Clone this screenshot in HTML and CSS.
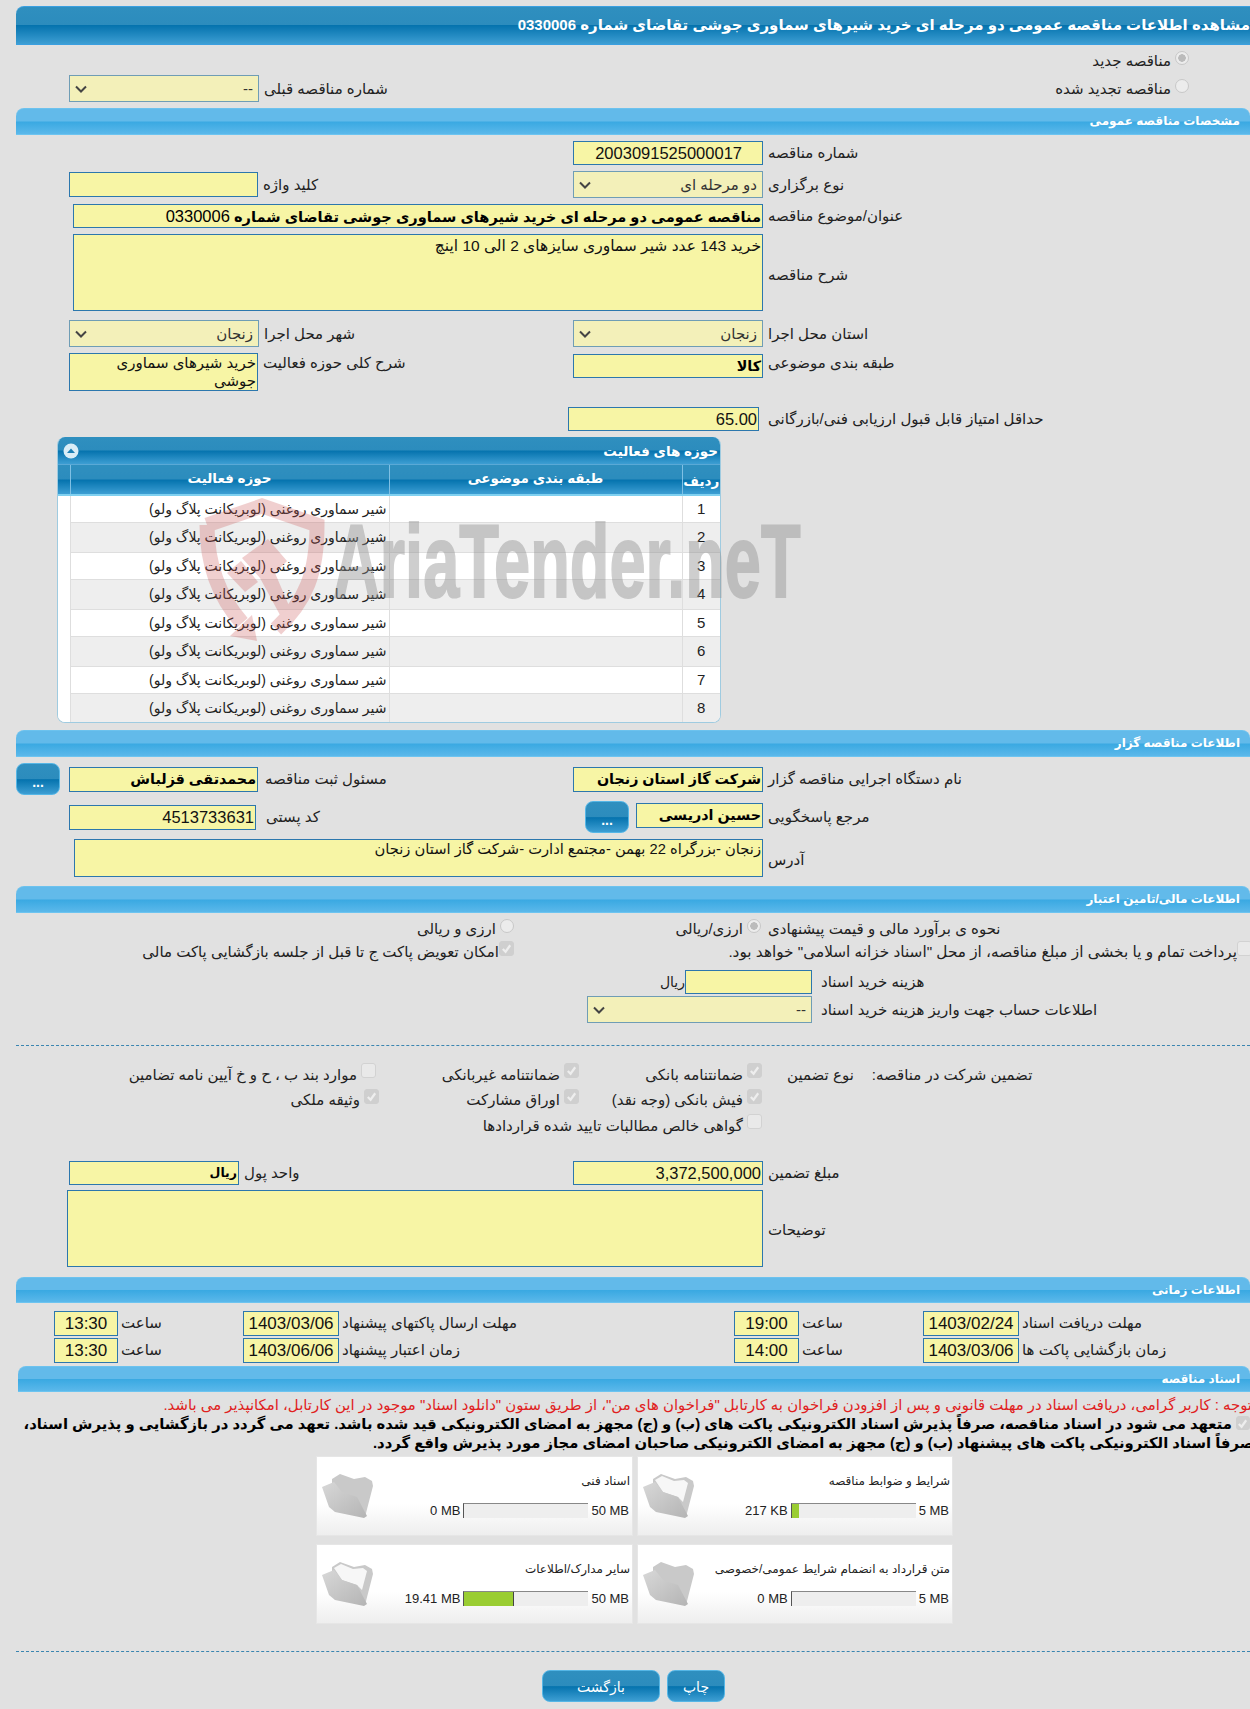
FILE: index.html
```html
<!DOCTYPE html>
<html lang="fa">
<head>
<meta charset="utf-8">
<title>مشاهده اطلاعات مناقصه</title>
<link rel="stylesheet" href="styles.css">
</head>
<body>
<div class="page">
  <div class="title-bar"><span>مشاهده اطلاعات مناقصه عمومی دو مرحله ای خرید شیرهای سماوری جوشی تقاضای شماره 0330006</span></div>

  <div class="top-row first">
    <div class="opt"><span class="radio on"></span><span>مناقصه جدید</span></div>
  </div>
  <div class="top-row">
    <div class="left">
      <div class="field select w190"><svg class="chev" viewBox="0 0 12 8"><path d="M1 1.5l5 5 5-5"/></svg><span>--</span></div>
      <span class="label">شماره مناقصه قبلی</span>
    </div>
    <div class="opt"><span class="radio"></span><span>مناقصه تجدید شده</span></div>
  </div>

  <div class="bar sec-a"><span>مشخصات مناقصه عمومی</span></div>

  <div class="row">
    <div class="left"></div>
    <div class="right"><div class="field num w190 inset">2003091525000017</div><span class="label">شماره مناقصه</span></div>
  </div>
  <div class="row">
    <div class="left"><div class="field w189 h25"></div><span class="label">کلید واژه</span></div>
    <div class="right"><div class="field select w190"><svg class="chev" viewBox="0 0 12 8"><path d="M1 1.5l5 5 5-5"/></svg><span>دو مرحله ای</span></div><span class="label">نوع برگزاری</span></div>
  </div>
  <div class="row">
    <div class="wide-l"><div class="field bold topic wide">مناقصه عمومی دو مرحله ای خرید شیرهای سماوری جوشی تقاضای شماره <span class="reg">0330006</span></div></div>
    <span class="label">عنوان/موضوع مناقصه</span>
  </div>
  <div class="row">
    <div class="wide-l"><div class="field area wide h77">خرید 143 عدد شیر سماوری سایزهای 2 الی 10 اینچ</div></div>
    <span class="label low">شرح مناقصه</span>
  </div>
  <div class="row mt9">
    <div class="left"><div class="field select w190"><svg class="chev" viewBox="0 0 12 8"><path d="M1 1.5l5 5 5-5"/></svg><span>زنجان</span></div><span class="label">شهر محل اجرا</span></div>
    <div class="right"><div class="field select w190"><svg class="chev" viewBox="0 0 12 8"><path d="M1 1.5l5 5 5-5"/></svg><span>زنجان</span></div><span class="label">استان محل اجرا</span></div>
  </div>
  <div class="row top">
    <div class="left top"><div class="field area w189 h38">خرید شیرهای سماوری جوشی</div><span class="label lift">شرح کلی حوزه فعالیت</span></div>
    <div class="right top"><div class="field bold w190 h24 mt1">کالا</div><span class="label lift">طبقه بندی موضوعی</span></div>
  </div>
  <div class="row mt16">
    <div class="score-gap"></div>
    <div class="field num w191">65.00</div><span class="label ml9">حداقل امتیاز قابل قبول ارزیابی فنی/بازرگانی</span>
  </div>

  <div class="grid-wrap">
    <div class="grid-title">
      <svg class="collapse" viewBox="0 0 16 16"><circle cx="8" cy="8" r="7.5" fill="#d9edf7"/><path d="M4 10l4-4.5 4 4.5z" fill="#1b7fb5"/></svg>
      <span>حوزه های فعالیت</span>
    </div>
    <table class="grid">
      <colgroup><col class="c0"><col class="c1"><col class="c2"><col class="c3"></colgroup>
      <thead><tr><th></th><th>حوزه فعالیت</th><th>طبقه بندی موضوعی</th><th class="th-low">ردیف</th></tr></thead>
      <tbody>
        <tr><td></td><td class="act">شیر سماوری روغنی (لوبریکانت پلاگ ولو)</td><td></td><td class="n">1</td></tr>
        <tr><td></td><td class="act">شیر سماوری روغنی (لوبریکانت پلاگ ولو)</td><td></td><td class="n">2</td></tr>
        <tr><td></td><td class="act">شیر سماوری روغنی (لوبریکانت پلاگ ولو)</td><td></td><td class="n">3</td></tr>
        <tr><td></td><td class="act">شیر سماوری روغنی (لوبریکانت پلاگ ولو)</td><td></td><td class="n">4</td></tr>
        <tr><td></td><td class="act">شیر سماوری روغنی (لوبریکانت پلاگ ولو)</td><td></td><td class="n">5</td></tr>
        <tr><td></td><td class="act">شیر سماوری روغنی (لوبریکانت پلاگ ولو)</td><td></td><td class="n">6</td></tr>
        <tr><td></td><td class="act">شیر سماوری روغنی (لوبریکانت پلاگ ولو)</td><td></td><td class="n">7</td></tr>
        <tr><td></td><td class="act">شیر سماوری روغنی (لوبریکانت پلاگ ولو)</td><td></td><td class="n">8</td></tr>
      </tbody>
    </table>
  </div>

  <div class="bar sec-b"><span>اطلاعات مناقصه گزار</span></div>

  <div class="row">
    <div class="left flush">
      <div class="btn dots">...</div>
      <div class="field bold w189 h25 ml9">محمدتقی قزلباش</div><span class="label ml7">مسئول ثبت مناقصه</span>
    </div>
    <div class="right"><div class="field bold w190 h25">شرکت گاز استان زنجان</div><span class="label">نام دستگاه اجرایی مناقصه گزار</span></div>
  </div>
  <div class="row">
    <div class="left"><div class="field num w187 h25">4513733631</div><span class="label ml10">کد پستی</span></div>
    <div class="right"><div class="btn dots ml12">...</div><div class="field bold w127 h25 ml7 raise">حسین ادریسی</div><span class="label">مرجع پاسخگویی</span></div>
  </div>
  <div class="row">
    <div class="addr-l"><div class="field area addr">زنجان -بزرگراه 22 بهمن -مجتمع ادارت -شرکت گاز استان زنجان</div></div>
    <span class="label low">آدرس</span>
  </div>

  <div class="bar sec-c"><span>اطلاعات مالی/تامین اعتبار</span></div>

  <div class="row mt7 h18">
    <div class="end-l"><div class="opt"><span class="radio"></span><span>ارزی و ریالی</span></div></div>
    <div class="end-r"><div class="opt"><span class="radio on"></span><span>ارزی/ریالی</span></div></div>
    <span class="label">نحوه ی برآورد مالی و قیمت پیشنهادی</span>
  </div>
  <div class="row mt5 h18">
    <div class="end-l"><div class="opt tight"><span class="check on"><svg viewBox="0 0 14 14"><path d="M3 7.5l3 3 5-7"/></svg></span><span>امکان تعویض پاکت ج تا قبل از جلسه بازگشایی پاکت مالی</span></div></div>
    <div class="opt tight far"><span class="check"></span><span>پرداخت تمام و یا بخشی از مبلغ مناقصه، از محل "اسناد خزانه اسلامی" خواهد بود.</span></div>
  </div>
  <div class="row mt9">
    <div class="doc-ctl"><span class="plain">ریال</span><div class="field w127"></div></div>
    <span class="label ml9">هزینه خرید اسناد</span>
  </div>
  <div class="row mt2">
    <div class="doc-sel"><div class="field select doc"><svg class="chev" viewBox="0 0 12 8"><path d="M1 1.5l5 5 5-5"/></svg><span>--</span></div></div>
    <span class="label ml9">اطلاعات حساب جهت واریز هزینه خرید اسناد</span>
  </div>

  <div class="dash d1"></div>

  <div class="guar">
    <div class="gcols">
      <div class="opt"><span class="check on"><svg viewBox="0 0 14 14"><path d="M3 7.5l3 3 5-7"/></svg></span><span>ضمانتنامه بانکی</span></div>
      <div class="opt"><span class="check on"><svg viewBox="0 0 14 14"><path d="M3 7.5l3 3 5-7"/></svg></span><span>ضمانتنامه غیربانکی</span></div>
      <div class="opt"><span class="check"></span><span>موارد بند ب ، ح و خ آیین نامه تضامین</span></div>
      <div class="opt"><span class="check on"><svg viewBox="0 0 14 14"><path d="M3 7.5l3 3 5-7"/></svg></span><span>فیش بانکی (وجه نقد)</span></div>
      <div class="opt"><span class="check on"><svg viewBox="0 0 14 14"><path d="M3 7.5l3 3 5-7"/></svg></span><span>اوراق مشارکت</span></div>
      <div class="opt shift"><span class="check on"><svg viewBox="0 0 14 14"><path d="M3 7.5l3 3 5-7"/></svg></span><span>وثیقه ملکی</span></div>
      <div class="opt span3"><span class="check"></span><span>گواهی خالص مطالبات تایید شده قراردادها</span></div>
    </div>
    <span class="label g-type">نوع تضمین</span>
    <span class="label g-head">تضمین شرکت در مناقصه:</span>
  </div>

  <div class="row mt22">
    <div class="left"><div class="field bold unit-box w170">ریال</div><span class="label unit">واحد پول</span></div>
    <div class="right"><div class="field num w190">3,372,500,000</div><span class="label">مبلغ تضمین</span></div>
  </div>
  <div class="row mt5">
    <div class="note-l"><div class="field area note-box"></div></div>
    <span class="label low">توضیحات</span>
  </div>

  <div class="bar sec-d"><span>اطلاعات زمانی</span></div>

  <div class="times">
    <span></span>
    <div class="field num c">13:30</div>
    <span class="label">ساعت</span>
    <div class="field num c">1403/03/06</div>
    <span class="label">مهلت ارسال پاکتهای پیشنهاد</span>
    <div class="field num c">19:00</div>
    <span class="label">ساعت</span>
    <div class="field num c">1403/02/24</div>
    <span class="label">مهلت دریافت اسناد</span>

    <span></span>
    <div class="field num c">13:30</div>
    <span class="label">ساعت</span>
    <div class="field num c">1403/06/06</div>
    <span class="label">زمان اعتبار پیشنهاد</span>
    <div class="field num c">14:00</div>
    <span class="label">ساعت</span>
    <div class="field num c">1403/03/06</div>
    <span class="label">زمان بازگشایی پاکت ها</span>
  </div>

  <div class="bar sec-e"><span>اسناد مناقصه</span></div>

  <p class="red">توجه : کاربر گرامی، دریافت اسناد در مهلت قانونی و پس از افزودن فراخوان به کارتابل "فراخوان های من"، از طریق ستون "دانلود اسناد" موجود در این کارتابل، امکانپذیر می باشد.</p>
  <div class="pledge">
    <span class="check on pledge-check"><svg viewBox="0 0 14 14"><path d="M3 7.5l3 3 5-7"/></svg></span>
    متعهد می شود در اسناد مناقصه، صرفاً پذیرش اسناد الکترونیکی پاکت های (ب) و (ج) مجهز به امضای الکترونیکی قید شده باشد. تعهد می گردد در بازگشایی و پذیرش اسناد،
    <span class="line2">صرفاً اسناد الکترونیکی پاکت های پیشنهاد (ب) و (ج) مجهز به امضای الکترونیکی صاحبان امضای مجاز مورد پذیرش واقع گردد.</span>
  </div>

  <div class="cards">
    <div class="card">
      <svg class="folder" viewBox="0 0 52 46"><use href="#fold-empty"/></svg>
      <div class="card-body">
        <div class="card-title">اسناد فنی</div>
        <div class="meter"><span class="val">0 MB</span><span class="track"></span><span class="max">50 MB</span></div>
      </div>
    </div>
    <div class="card">
      <svg class="folder" viewBox="0 0 52 46"><use href="#fold-full"/></svg>
      <div class="card-body">
        <div class="card-title">شرایط و ضوابط مناقصه</div>
        <div class="meter"><span class="val">217 KB</span><span class="track"><span class="fill" style="width:7px"></span></span><span class="max">5 MB</span></div>
      </div>
    </div>
    <div class="card">
      <svg class="folder" viewBox="0 0 52 46"><use href="#fold-full"/></svg>
      <div class="card-body">
        <div class="card-title">سایر مدارک/اطلاعات</div>
        <div class="meter"><span class="val">19.41 MB</span><span class="track"><span class="fill edge" style="width:49px"></span></span><span class="max">50 MB</span></div>
      </div>
    </div>
    <div class="card">
      <svg class="folder" viewBox="0 0 52 46"><use href="#fold-empty"/></svg>
      <div class="card-body">
        <div class="card-title">متن قرارداد به انضمام شرایط عمومی/خصوصی</div>
        <div class="meter"><span class="val">0 MB</span><span class="track"></span><span class="max">5 MB</span></div>
      </div>
    </div>
  </div>

  <div class="dash d2"></div>

  <div class="actions">
    <div class="btn back">بازگشت</div>
    <div class="btn print">چاپ</div>
  </div>

  <div class="watermark">
    <svg class="wm-logo" viewBox="0 0 160 160">
      <g fill="none" stroke="#cc5555" stroke-width="15">
        <path d="M17 32L72 13 127 32C127 80 116 108 86 136"/>
        <path d="M17 32C17 72 30 105 52 130"/>
      </g>
      <g fill="#cc5555">
        <path d="M37 80L51 68 68 89 55 99z"/>
        <path d="M52 65L78 46 97 68 85 80 100 115 90 122 70 85z"/>
        <path d="M40 143L62 122 67 148z"/>
      </g>
    </svg>
    <span class="wm-text">AriaTender.neT</span>
  </div>
</div>

<svg class="defs" width="0" height="0">
  <defs>
    <linearGradient id="fg" x1="0" y1="0" x2="1" y2="1"><stop offset="0" stop-color="#d8d8d8"/><stop offset="1" stop-color="#b4b4b4"/></linearGradient>
    <g id="fold-empty">
      <path d="M10 5L18 0 32 5 43 3 50 7 51 12 43 43 10 25z" fill="#c9c9c9"/>
      <path d="M0 13L12 8 20 18 35 23 45 42 42 44 13 38 7 33z" fill="url(#fg)"/>
    </g>
    <g id="fold-full">
      <path d="M10 5L18 0 32 5 43 3 50 7 51 12 43 43 10 25z" fill="#c9c9c9"/>
      <path d="M12 6L19 2 31 7 41 6 45 9 40 28 35 23 20 18z" fill="#f7f7f7"/>
      <path d="M0 13L12 8 20 18 35 23 45 42 42 44 13 38 7 33z" fill="url(#fg)"/>
    </g>
  </defs>
</svg>
</body>
</html>
```
FILE: styles.css
```css
html,body{margin:0;padding:0;height:1709px;overflow:hidden;background:#e1e1e1}
body{font:15px "Liberation Sans","DejaVu Sans",sans-serif;color:#222}
.page{position:relative;margin:6px 0 0 16px;width:1234px}
.defs{position:absolute}
.title-bar{box-sizing:border-box;height:39px;border:1px solid #3a9fe0;border-width:1px 0;border-radius:8px 0 0 0;background:linear-gradient(#2f8fbf 0,#2c8cbd 48%,#0573ae 50%,#3d9ed3 100%);color:#fff;font-weight:bold;font-size:15px;line-height:35px;direction:rtl;white-space:nowrap;text-align:right}
.bar{box-sizing:border-box;height:27px;border-radius:8px 8px 0 0;border-top:1px solid #6cc2ee;border-bottom:1px solid #6cc4f0;background:linear-gradient(#62baea 0,#62baea 48%,#3aa9e2 52%,#5bb8ea 100%);color:#fff;font-weight:bold;font-size:12px;line-height:24px;direction:rtl;padding-right:10px;white-space:nowrap}
.sec-a{margin-top:6px}
.sec-b{margin-top:7px}
.sec-c{margin-top:9px}
.sec-d{margin-top:10px;height:26px}
.sec-e{margin:3px 0 0 2px;height:26px}
.top-row{display:flex;align-items:center;justify-content:space-between;height:27px;padding-right:61px;margin-top:1px}
.top-row.first{justify-content:flex-end;margin-top:2px}
.row{display:flex;align-items:center;margin-top:6px}
.row.top,.left.top,.right.top{align-items:flex-start}
.mt2{margin-top:2px}.mt5{margin-top:5px}.mt7{margin-top:7px}.mt9{margin-top:9px}.mt16{margin-top:16px}.mt22{margin-top:22px}.mt1{margin-top:1px}
.h18{height:18px}
.left{box-sizing:border-box;width:557px;padding-left:53px;display:flex;align-items:center;flex:none}
.left.flush{padding-left:0}
.right{display:flex;align-items:center}
.wide-l,.addr-l,.note-l{width:747px;display:flex;justify-content:flex-end;flex:none}
.score-gap{width:552px;flex:none}
.label{direction:rtl;white-space:nowrap;margin-left:5px;font-size:15px;line-height:18px;color:#222}
.lift{margin-top:1px}
.low{margin-top:4px}
.ml7{margin-left:7px}.ml9{margin-left:9px}.ml10{margin-left:10px}.ml12{margin-left:12px}
.field{box-sizing:border-box;height:24px;background:#f7f5a5;border:1px solid #2c77ad;direction:rtl;font-size:15px;line-height:21px;color:#111;white-space:nowrap;overflow:hidden;padding:0 1px}
.num{font-size:16.5px;line-height:23px}
.inset{padding-right:20px}
.c{text-align:center}
.bold{font-weight:bold;font-size:14.3px;line-height:22px;color:#000}
.topic{font-size:14.6px}
.reg{font-weight:normal;font-size:16.5px}
.unit-box{font-size:12.5px}
.select{height:27px;background:#f3f0b9;border:1px solid #6f9db5;display:flex;justify-content:space-between;align-items:center;flex-direction:row;padding:0 5px;color:#333;font-size:15px}
.chev{width:12px;height:8px;fill:none;stroke:#444;stroke-width:2;order:2}
.area{white-space:normal;line-height:18px;height:auto}
.w190{width:190px}.w191{width:191px}.w189{width:189px}.w187{width:187px}.w127{width:127px}.w170{width:170px}
.h25{height:25px}.h24{height:24px}.h38{height:38px}.h77{height:77px;padding-top:2px;font-size:15.5px}
.wide{width:690px}
.addr{width:689px;height:38px;font-size:14.7px}
.note-box{width:696px;height:77px}
.doc-ctl{box-sizing:border-box;width:796px;display:flex;justify-content:flex-end;align-items:center;flex:none}
.doc-sel{width:796px;display:flex;justify-content:flex-end;flex:none}
.doc{width:225px}
.plain{direction:rtl;font-size:14px}
.raise{margin-top:-4px}
.opt{display:flex;align-items:center;gap:4px;direction:rtl;white-space:nowrap;font-size:15px;line-height:18px}
.opt.tight{gap:0}
.radio{box-sizing:border-box;display:inline-block;width:14px;height:14px;border-radius:50%;border:1px solid #c8c8c8;background:#ececec;position:relative;top:-3px;flex:none}
.radio.on{background:radial-gradient(circle,#bbb 0 3.5px,#ececec 4px)}
.check{box-sizing:border-box;display:inline-block;width:15px;height:15px;border-radius:3px;border:1px solid #d2d2d2;background:#e9e9e9;position:relative;top:-4px;flex:none}
.check.on{background:#cfcfcf;border-color:#cfcfcf}
.check svg{display:block;width:13px;height:13px;fill:none;stroke:#eee;stroke-width:2.4}
.end-l{width:498px;display:flex;justify-content:flex-end;flex:none}
.end-r{width:249px;display:flex;justify-content:flex-end;flex:none;padding-right:2px;box-sizing:border-box}
.far{margin-left:auto;margin-right:-2px;font-size:15.3px}
.dash{border-top:1px dashed #3a85b0}
.d1{margin-top:22px}
.d2{margin-top:27px}
.guar{display:flex;margin-top:16px}
.gcols{width:746px;flex:none;direction:rtl;display:grid;grid-template-columns:183px 203px 1fr;grid-auto-rows:25.6px;align-items:center}
.shift{margin-right:-3px}
.span3{grid-column:1/4}
.g-type{margin-left:25px;margin-top:4px;align-self:flex-start}
.g-head{margin-left:18px;margin-top:4px;align-self:flex-start}
.unit{margin-left:5px}
.times{margin-top:8px;display:grid;grid-template-columns:38px 64px 125px 96px 395px 65px 124px 96px 1fr;grid-auto-rows:25px;row-gap:2px;align-items:center}
.times .field{height:25px;font-size:17px}
.times .label{margin-left:3px;text-align:left}
.red{margin:4px 0 0;width:1236px;color:#e02020;font-size:14.9px;line-height:18px;direction:rtl;white-space:nowrap;height:18px}
.pledge{width:1234px;margin-top:1px;direction:rtl;font-weight:bold;font-size:14.8px;line-height:19px;color:#000;white-space:nowrap;height:38px}
.line2{display:block;margin-right:-4px}
.pledge-check{width:14px;height:14px;top:0;vertical-align:-1px}
.cards{margin:3px 0 0 300px;width:637px;display:grid;grid-template-columns:317px 316px;column-gap:4px;row-gap:8px;grid-auto-rows:80px}
.card{box-sizing:border-box;border:1px solid #e6e6e6;background:linear-gradient(#fff 0,#fff 60%,#eee 100%);display:flex;align-items:flex-start;padding:17px 2px 0 5px}
.folder{width:52px;height:46px;flex:none}
.card-body{flex:1;direction:rtl;display:flex;flex-direction:column;min-width:0}
.card-title{font-size:12px;line-height:16px;height:30px;margin-top:-1px;white-space:nowrap}
.meter{display:flex;direction:ltr;align-items:center;gap:3px;font-size:13px;height:15px;white-space:nowrap;justify-content:flex-end;padding-right:1px}
.track{display:block;width:125px;height:15px;background:#eee;border-top:1px solid #888;border-left:1px solid #555;box-sizing:border-box;flex:none}
.fill{display:block;height:100%;background:#9acd32}
.fill.edge{border-right:1px solid #444;box-sizing:content-box}
.btn{box-sizing:border-box;border:1px solid #55b6e6;border-radius:8px;background:linear-gradient(#2f8fbf 0,#2c8cbd 50%,#0573ae 52%,#3d9ed3 100%);color:#fff;text-align:center;direction:rtl;flex:none}
.dots{width:44px;height:32px;font-weight:bold;font-size:14px;line-height:36px}
.actions{display:flex;gap:7px;margin:18px 0 0 526px}
.back{width:118px;height:32px;font-size:14px;line-height:33px}
.print{width:58px;height:32px;font-size:14px;line-height:33px}
.grid-wrap{margin:6px 0 0 41px;width:664px;box-sizing:border-box;border:1px solid #9fcbe0;border-top:0;border-radius:8px;overflow:hidden;background:#fff}
.grid-title{height:28px;background:linear-gradient(#2f8fbf 0,#2c8cbd 48%,#0573ae 52%,#3d9ed3 100%);display:flex;justify-content:space-between;align-items:center;padding:0 2px 0 5px;color:#fff;font-weight:bold;font-size:13.5px;direction:ltr;border-bottom:1px solid #5aa9d6;box-sizing:border-box}
.grid-title span{direction:rtl}
.collapse{width:16px;height:16px}
.grid{border-collapse:collapse;table-layout:fixed;width:662px;direction:ltr}
.c0{width:12px}.c1{width:319px}.c2{width:293px}.c3{width:38px}
.grid th{box-sizing:border-box;height:30px;padding:0 0 3px;background:linear-gradient(#2f8fbf 0,#2c8cbd 48%,#0573ae 52%,#3d9ed3 100%);color:#fff;font-size:13.5px;font-weight:bold;direction:rtl;white-space:nowrap;border-left:1px solid #7fc0e4;border-bottom:2px solid #7fd0f0}
.grid th:first-child{border-left:0}
.th-low{padding:3px 0 0 !important}
.grid td{box-sizing:border-box;padding:0;height:27px;border-left:1px solid #dedede;border-bottom:1px solid #dedede;font-size:14px;line-height:18px}
.grid td:first-child{border-left:0;border-bottom:0;background:#fff}
.grid tr:nth-child(even) td{height:30px;background:#eee}
.grid tr:nth-child(even) td:first-child{background:#fff}
.grid tr:last-child td{height:29px;border-bottom:0}
.act{direction:rtl;padding-right:2px !important;white-space:nowrap}
.n{text-align:center;font-size:15px !important}
.watermark{position:absolute;left:184px;top:492px;width:620px;height:140px;pointer-events:none}
.wm-logo{position:absolute;left:-10px;top:-5px;width:160px;height:160px;opacity:.28}
.wm-text{position:absolute;left:133px;top:6px;font-family:"Liberation Sans",sans-serif;font-weight:bold;font-size:103px;line-height:116px;color:#8d8d8d;opacity:.42;transform:scaleX(.63);transform-origin:0 0;white-space:nowrap;-webkit-text-stroke:2px #8d8d8d}
```
